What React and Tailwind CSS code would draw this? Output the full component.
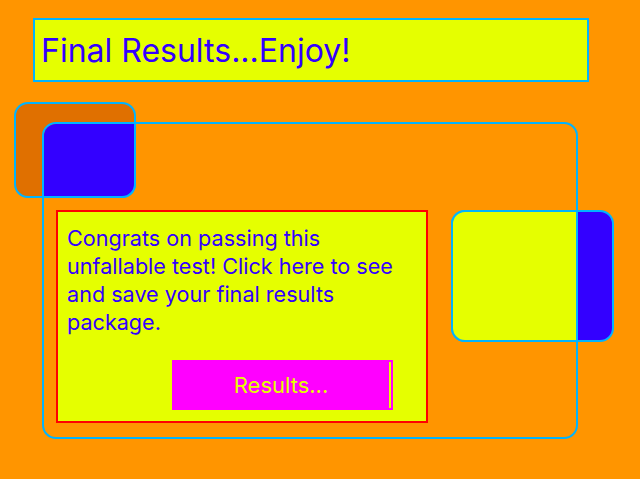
import React from "react";

const font = { fontFamily: "Inter, 'Liberation Sans', sans-serif" };

function ResultsCard() {
  return (
    <div className="relative w-[372px] h-[213px] border-2 border-[#ff0000] bg-[#e5ff00] flex flex-col pt-[12px] px-[9px]">
      <p className="text-[21.6px] leading-[28px] text-[#3300ff]">
        Congrats on passing this unfallable test! Click here to see and save
        your final results package.
      </p>
      <div className="flex justify-end mt-[24px] pr-[24px]">
        <button className="relative w-[221px] h-[50px] bg-[#ff00ff] text-[#e5ff00] text-[22px] leading-[28px] pr-[3px]">
          Results...
          <span className="absolute right-[2px] top-[2px] bottom-[2px] w-[2px] bg-[#e5ff00]" />
        </button>
      </div>
    </div>
  );
}

export default function App() {
  return (
    <div
      className="relative w-[640px] h-[479px] bg-[#ff9500] overflow-hidden pt-[18px]"
      style={font}
    >
      <div className="ml-[33px] w-[556px] h-[64px] border-2 border-[#00b4ff] bg-[#e5ff00] pl-[6px] pt-[11px]">
        <h1 className="text-[32px] leading-[40px] text-[#3300ff]">
          Final Results...Enjoy!
        </h1>
      </div>

      {/* decorative boxes peeking behind the main panel */}
      <div className="absolute left-[14px] top-[102px] w-[122px] h-[96px] rounded-[14px] border-2 border-[#00b4ff] bg-[#e07000]" />
      <div className="absolute left-[451px] top-[210px] w-[163px] h-[132px] rounded-[14px] border-2 border-[#00b4ff] bg-[#3300ff]" />

      <div className="relative mt-[40px] ml-[42px] w-[536px] h-[317px] rounded-[14px] border-2 border-[#00b4ff] overflow-hidden pt-[86px] pl-[12px]">
        <div className="absolute left-[-30px] top-[-22px] w-[122px] h-[96px] rounded-[14px] border-2 border-[#00b4ff] bg-[#3300ff]" />
        <div className="absolute left-[407px] top-[86px] w-[163px] h-[132px] rounded-[14px] border-2 border-[#00b4ff] bg-[#e5ff00]" />
        <ResultsCard />
      </div>
    </div>
  );
}
